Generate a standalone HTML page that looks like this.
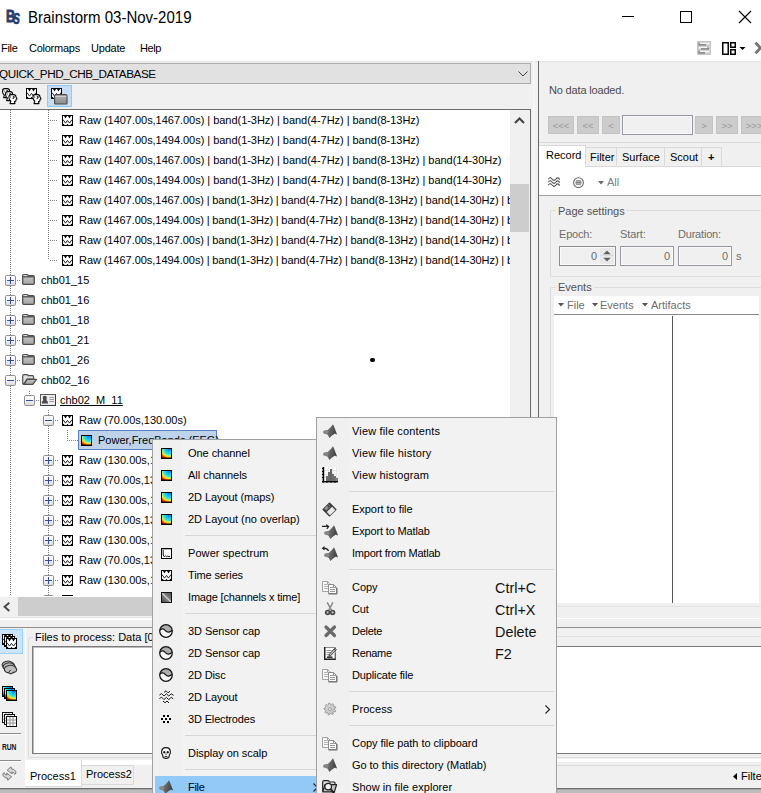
<!DOCTYPE html>
<html><head><meta charset="utf-8"><title>Brainstorm</title>
<style>
*{box-sizing:border-box;margin:0;padding:0}
html,body{width:761px;height:793px;overflow:hidden;background:#f0f0f0}
body{position:relative;font-family:"Liberation Sans",Arial,sans-serif;font-size:11px;color:#000}
.a{position:absolute}
.t{position:absolute;white-space:nowrap;line-height:14px;height:14px}
svg{position:absolute;overflow:visible}
.vd{position:absolute;width:1px;background-image:linear-gradient(#7f7f7f 50%,rgba(0,0,0,0) 50%);background-size:1px 2px}
.hd{position:absolute;height:1px;background-image:linear-gradient(90deg,#7f7f7f 50%,rgba(0,0,0,0) 50%);background-size:2px 1px}
.menu{position:absolute;background:#f2f2f2;border:1px solid #a0a0a0;overflow:hidden}
.gut{position:absolute;left:0;top:0;bottom:0;background:#f0f0f0}
.sep{position:absolute;height:1px;background:#d7d7d7}
.sc{position:absolute;font-size:14.4px;line-height:18px;height:18px;white-space:nowrap;color:#111}
.g{color:#5f5f5f}
.btn{position:absolute;background:#cccccc;border:1px solid #c3c3c3;color:#9a9a9a;text-align:center;font-size:9.5px;line-height:17px;height:18px;top:116px}
.fld{position:absolute;border:1px solid #9498a0;background:#f0f0f0;box-shadow:inset 0 0 0 1px #fafafa}
</style></head><body>
<div class="a" style="left:0;top:0;width:761px;height:61px;background:#fff"></div>
<div class="t" style="left:6px;top:7px;font-weight:bold;font-size:17px;line-height:20px;height:20px;color:#2a3c6a;transform:scaleX(0.74);transform-origin:0 0;-webkit-text-stroke:0.9px #2a3c6a">B</div><div class="t" style="left:13px;top:4.5px;font-weight:bold;font-style:italic;font-size:21px;line-height:24px;height:24px;color:#2a3c6a;transform:scaleX(0.62);transform-origin:0 0;-webkit-text-stroke:0.5px #2a3c6a">s</div>
<div class="t" style="left:28px;top:8px;font-size:16px;line-height:20px;height:20px;transform:scaleX(0.938);transform-origin:0 0">Brainstorm 03-Nov-2019</div>
<svg style="left:622px;top:10px" width="131" height="14" viewBox="0 0 131 14"><path d="M0 6.5 H12" stroke="#000" stroke-width="1"/><rect x="58.5" y="1.5" width="11" height="11" fill="none" stroke="#000" stroke-width="1"/><path d="M117 1 L129 13 M129 1 L117 13" stroke="#000" stroke-width="1.1"/></svg>
<div class="t" style="left:1px;top:41px;letter-spacing:-0.3px">File</div><div class="t" style="left:29px;top:41px;letter-spacing:-0.25px">Colormaps</div><div class="t" style="left:91px;top:41px;letter-spacing:-0.2px">Update</div><div class="t" style="left:140px;top:41px;letter-spacing:-0.4px">Help</div>
<svg style="left:697px;top:41px" width="14" height="14" viewBox="0 0 14 14"><rect x="0" y="0" width="14" height="14" fill="#c8c8c8"/><path d="M3 2.6 H12.5 M2 6.6 H12.5 M3 10.6 H12.5" stroke="#f4f4f4" stroke-width="1.6"/><path d="M1.5 3.9 H9 M4 7.9 H12 M1.5 11.9 H8" stroke="#777" stroke-width="1.3"/><path d="M2 1.5 V4 M11 5.5 V8 M2 9.5 V12" stroke="#8a8a8a" stroke-width="1.2"/></svg><svg style="left:722px;top:42px" width="26" height="13" viewBox="0 0 26 13"><rect x="0.75" y="0.75" width="5.5" height="11.5" fill="#fff" stroke="#000" stroke-width="1.5"/><rect x="8.75" y="0.75" width="4.5" height="4.5" fill="#fff" stroke="#000" stroke-width="1.5"/><rect x="8.75" y="7.75" width="4.5" height="4.5" fill="#fff" stroke="#000" stroke-width="1.5"/><path d="M17.5 5 H23.5 L20.5 8 Z" fill="#000"/></svg><svg style="left:754px;top:42px" width="8" height="12" viewBox="0 0 8 12"><path d="M1.5 0.8 L6.5 6 L1.5 11.2" fill="none" stroke="#747474" stroke-width="2.8"/></svg>
<div class="a" style="left:0;top:61px;width:761px;height:2px;background:linear-gradient(#e3e3e3,#f0f0f0)"></div>
<div class="a" style="left:-1px;top:63px;width:532px;height:21px;background:#e1e1e1;border:1px solid #adadad"></div><div class="t" style="left:-1px;top:66px;font-size:11.7px;letter-spacing:-0.45px;line-height:15px;height:15px">QUICK_PHD_CHB_DATABASE</div><svg style="left:518px;top:71px" width="10" height="6" viewBox="0 0 10 6"><path d="M0.5 0.5 L5 5 L9.5 0.5" fill="none" stroke="#404040" stroke-width="1"/></svg>
<div class="a" style="left:47px;top:85px;width:25px;height:22px;background:#c4ddf4;border:1px solid #94c9f5"></div><svg style="left:0px;top:84px" width="20" height="22" viewBox="0 0 20 22"><path d="M4.6 4.6 H7 Q9.6 4.6 9.6 7 L10.6 8.8 L9.6 9.4 V10.6 Q9.4 11.6 8 11.4 L8.6 13.6 H3.6 L4.4 11 Q2.5 9.8 2.5 7.4 Q2.5 4.6 4.6 4.6 Z" fill="#fff" stroke="#000" stroke-width="1.05" stroke-linejoin="round"/><path d="M6.4 6.6 h1.4 v1.2 h-1 v1.4" fill="none" stroke="#000" stroke-width="0.9"/><rect x="3.6" y="6" width="1.2" height="2.4" fill="#9a9a9a"/><path d="M7.6 7.6 H10 Q12.6 7.6 12.6 10 L13.6 11.8 L12.6 12.4 V13.6 Q12.4 14.6 11 14.4 L11.6 16.6 H6.6 L7.4 14 Q5.5 12.8 5.5 10.4 Q5.5 7.6 7.6 7.6 Z" fill="#fff" stroke="#000" stroke-width="1.05" stroke-linejoin="round"/><path d="M9.4 9.6 h1.4 v1.2 h-1 v1.4" fill="none" stroke="#000" stroke-width="0.9"/><rect x="6.6" y="9" width="1.2" height="2.4" fill="#9a9a9a"/><path d="M11.0 10.6 H13.4 Q16.0 10.6 16.0 13 L17.0 14.8 L16.0 15.4 V16.6 Q15.8 17.6 14.4 17.4 L15.0 19.6 H10.0 L10.8 17 Q8.9 15.8 8.9 13.4 Q8.9 10.6 11.0 10.6 Z" fill="#fff" stroke="#000" stroke-width="1.05" stroke-linejoin="round"/><path d="M12.8 12.6 h1.4 v1.2 h-1 v1.4" fill="none" stroke="#000" stroke-width="0.9"/><rect x="10.0" y="12" width="1.2" height="2.4" fill="#9a9a9a"/></svg><svg style="left:26px;top:88px" width="16" height="17" viewBox="0 0 16 17"><rect x="0.5" y="0.5" width="10" height="10" fill="#fff" stroke="#000" stroke-width="1"/><path d="M2 1 H5 L3.5 3.5 Z M6 1 H9 L7.5 3.5 Z" fill="#000"/><path d="M1 4.6 L3.5 8.1 L5.5 5.4 L7.5 8.1 L10 4.6" fill="none" stroke="#222" stroke-width="1"/><path d="M1 10 V9.1 L1.7 8.8 L2.6 10 Z M4.6 10 L5.5 8.7 L6.4 10 Z M8.4 10 L9.3 8.8 L10 9.1 V10 Z" fill="#000"/><path d="M9.0 6.6 H11.4 Q14.0 6.6 14.0 9 L15.0 10.8 L14.0 11.4 V12.6 Q13.8 13.6 12.4 13.4 L13.0 15.6 H8.0 L8.8 13 Q6.9 11.8 6.9 9.4 Q6.9 6.6 9.0 6.6 Z" fill="#fff" stroke="#000" stroke-width="1.05" stroke-linejoin="round"/><path d="M10.8 8.6 h1.4 v1.2 h-1 v1.4" fill="none" stroke="#000" stroke-width="0.9"/><rect x="8.0" y="8" width="1.2" height="2.4" fill="#9a9a9a"/></svg><svg style="left:51px;top:88px" width="17" height="17" viewBox="0 0 17 17"><linearGradient id="tbf" x1="0" y1="0" x2="0" y2="1"><stop offset="0" stop-color="#b4b4b4"/><stop offset="1" stop-color="#8c8c8c"/></linearGradient><rect x="0.5" y="0.5" width="10" height="10" fill="#fff" stroke="#000" stroke-width="1"/><path d="M2 1 H5 L3.5 3.5 Z M6 1 H9 L7.5 3.5 Z" fill="#000"/><path d="M1 4.6 L3.5 8.1 L5.5 5.4 L7.5 8.1 L10 4.6" fill="none" stroke="#222" stroke-width="1"/><path d="M1 10 V9.1 L1.7 8.8 L2.6 10 Z M4.6 10 L5.5 8.7 L6.4 10 Z M8.4 10 L9.3 8.8 L10 9.1 V10 Z" fill="#000"/><path d="M3.6 15.4 V8 Q3.6 6.6 5 6.6 H14.6 Q16 6.6 16 8 V15 Q16 16 15 16 H4.6 Q3.6 16 3.6 15 Z" fill="url(#tbf)" stroke="#4a4a4a" stroke-width="1.1"/><path d="M4.2 8.4 H15.4" stroke="#d8d8d8" stroke-width="0.9"/></svg>
<div class="a" id="tree" style="left:0;top:109px;width:531px;height:508px;background:#fff;border-top:1px solid #6c6c6c;border-right:1px solid #6c6c6c"></div>
<div class="a" style="left:0;top:110px;width:510px;height:486px;overflow:hidden">
<div class="vd" style="left:10px;top:0;height:487px"></div><div class="vd" style="left:48px;top:0;height:150px"></div><div class="hd" style="left:50px;top:10px;width:8px"></div><svg style="left:62px;top:5px" width="11" height="11" viewBox="0 0 11 11"><rect x="0.5" y="0.5" width="10" height="10" fill="#fff" stroke="#000" stroke-width="1"/><path d="M2 1 H5 L3.5 3.5 Z M6 1 H9 L7.5 3.5 Z" fill="#000"/><path d="M1 4.6 L3.5 8.1 L5.5 5.4 L7.5 8.1 L10 4.6" fill="none" stroke="#222" stroke-width="1"/><path d="M1 10 V9.1 L1.7 8.8 L2.6 10 Z M4.6 10 L5.5 8.7 L6.4 10 Z M8.4 10 L9.3 8.8 L10 9.1 V10 Z" fill="#000"/></svg><div class="t" style="left:79px;top:3px;letter-spacing:-0.03px">Raw (1407.00s,1467.00s) | band(1-3Hz) | band(4-7Hz) | band(8-13Hz)</div><div class="hd" style="left:50px;top:30px;width:8px"></div><svg style="left:62px;top:25px" width="11" height="11" viewBox="0 0 11 11"><rect x="0.5" y="0.5" width="10" height="10" fill="#fff" stroke="#000" stroke-width="1"/><path d="M2 1 H5 L3.5 3.5 Z M6 1 H9 L7.5 3.5 Z" fill="#000"/><path d="M1 4.6 L3.5 8.1 L5.5 5.4 L7.5 8.1 L10 4.6" fill="none" stroke="#222" stroke-width="1"/><path d="M1 10 V9.1 L1.7 8.8 L2.6 10 Z M4.6 10 L5.5 8.7 L6.4 10 Z M8.4 10 L9.3 8.8 L10 9.1 V10 Z" fill="#000"/></svg><div class="t" style="left:79px;top:23px;letter-spacing:-0.03px">Raw (1467.00s,1494.00s) | band(1-3Hz) | band(4-7Hz) | band(8-13Hz)</div><div class="hd" style="left:50px;top:50px;width:8px"></div><svg style="left:62px;top:45px" width="11" height="11" viewBox="0 0 11 11"><rect x="0.5" y="0.5" width="10" height="10" fill="#fff" stroke="#000" stroke-width="1"/><path d="M2 1 H5 L3.5 3.5 Z M6 1 H9 L7.5 3.5 Z" fill="#000"/><path d="M1 4.6 L3.5 8.1 L5.5 5.4 L7.5 8.1 L10 4.6" fill="none" stroke="#222" stroke-width="1"/><path d="M1 10 V9.1 L1.7 8.8 L2.6 10 Z M4.6 10 L5.5 8.7 L6.4 10 Z M8.4 10 L9.3 8.8 L10 9.1 V10 Z" fill="#000"/></svg><div class="t" style="left:79px;top:43px;letter-spacing:-0.03px">Raw (1407.00s,1467.00s) | band(1-3Hz) | band(4-7Hz) | band(8-13Hz) | band(14-30Hz)</div><div class="hd" style="left:50px;top:70px;width:8px"></div><svg style="left:62px;top:65px" width="11" height="11" viewBox="0 0 11 11"><rect x="0.5" y="0.5" width="10" height="10" fill="#fff" stroke="#000" stroke-width="1"/><path d="M2 1 H5 L3.5 3.5 Z M6 1 H9 L7.5 3.5 Z" fill="#000"/><path d="M1 4.6 L3.5 8.1 L5.5 5.4 L7.5 8.1 L10 4.6" fill="none" stroke="#222" stroke-width="1"/><path d="M1 10 V9.1 L1.7 8.8 L2.6 10 Z M4.6 10 L5.5 8.7 L6.4 10 Z M8.4 10 L9.3 8.8 L10 9.1 V10 Z" fill="#000"/></svg><div class="t" style="left:79px;top:63px;letter-spacing:-0.03px">Raw (1467.00s,1494.00s) | band(1-3Hz) | band(4-7Hz) | band(8-13Hz) | band(14-30Hz)</div><div class="hd" style="left:50px;top:90px;width:8px"></div><svg style="left:62px;top:85px" width="11" height="11" viewBox="0 0 11 11"><rect x="0.5" y="0.5" width="10" height="10" fill="#fff" stroke="#000" stroke-width="1"/><path d="M2 1 H5 L3.5 3.5 Z M6 1 H9 L7.5 3.5 Z" fill="#000"/><path d="M1 4.6 L3.5 8.1 L5.5 5.4 L7.5 8.1 L10 4.6" fill="none" stroke="#222" stroke-width="1"/><path d="M1 10 V9.1 L1.7 8.8 L2.6 10 Z M4.6 10 L5.5 8.7 L6.4 10 Z M8.4 10 L9.3 8.8 L10 9.1 V10 Z" fill="#000"/></svg><div class="t" style="left:79px;top:83px;letter-spacing:-0.03px;word-spacing:-0.3px">Raw (1407.00s,1467.00s) | band(1-3Hz) | band(4-7Hz) | band(8-13Hz) | band(14-30Hz) | band(31-45Hz)</div><div class="hd" style="left:50px;top:110px;width:8px"></div><svg style="left:62px;top:105px" width="11" height="11" viewBox="0 0 11 11"><rect x="0.5" y="0.5" width="10" height="10" fill="#fff" stroke="#000" stroke-width="1"/><path d="M2 1 H5 L3.5 3.5 Z M6 1 H9 L7.5 3.5 Z" fill="#000"/><path d="M1 4.6 L3.5 8.1 L5.5 5.4 L7.5 8.1 L10 4.6" fill="none" stroke="#222" stroke-width="1"/><path d="M1 10 V9.1 L1.7 8.8 L2.6 10 Z M4.6 10 L5.5 8.7 L6.4 10 Z M8.4 10 L9.3 8.8 L10 9.1 V10 Z" fill="#000"/></svg><div class="t" style="left:79px;top:103px;letter-spacing:-0.03px;word-spacing:-0.3px">Raw (1467.00s,1494.00s) | band(1-3Hz) | band(4-7Hz) | band(8-13Hz) | band(14-30Hz) | band(31-45Hz)</div><div class="hd" style="left:50px;top:130px;width:8px"></div><svg style="left:62px;top:125px" width="11" height="11" viewBox="0 0 11 11"><rect x="0.5" y="0.5" width="10" height="10" fill="#fff" stroke="#000" stroke-width="1"/><path d="M2 1 H5 L3.5 3.5 Z M6 1 H9 L7.5 3.5 Z" fill="#000"/><path d="M1 4.6 L3.5 8.1 L5.5 5.4 L7.5 8.1 L10 4.6" fill="none" stroke="#222" stroke-width="1"/><path d="M1 10 V9.1 L1.7 8.8 L2.6 10 Z M4.6 10 L5.5 8.7 L6.4 10 Z M8.4 10 L9.3 8.8 L10 9.1 V10 Z" fill="#000"/></svg><div class="t" style="left:79px;top:123px;letter-spacing:-0.03px;word-spacing:-0.3px">Raw (1407.00s,1467.00s) | band(1-3Hz) | band(4-7Hz) | band(8-13Hz) | band(14-30Hz) | band(31-45Hz) | band(46-70Hz)</div><div class="hd" style="left:50px;top:150px;width:8px"></div><svg style="left:62px;top:145px" width="11" height="11" viewBox="0 0 11 11"><rect x="0.5" y="0.5" width="10" height="10" fill="#fff" stroke="#000" stroke-width="1"/><path d="M2 1 H5 L3.5 3.5 Z M6 1 H9 L7.5 3.5 Z" fill="#000"/><path d="M1 4.6 L3.5 8.1 L5.5 5.4 L7.5 8.1 L10 4.6" fill="none" stroke="#222" stroke-width="1"/><path d="M1 10 V9.1 L1.7 8.8 L2.6 10 Z M4.6 10 L5.5 8.7 L6.4 10 Z M8.4 10 L9.3 8.8 L10 9.1 V10 Z" fill="#000"/></svg><div class="t" style="left:79px;top:143px;letter-spacing:-0.03px;word-spacing:-0.3px">Raw (1467.00s,1494.00s) | band(1-3Hz) | band(4-7Hz) | band(8-13Hz) | band(14-30Hz) | band(31-45Hz) | band(46-70Hz)</div>
<svg style="left:5px;top:165px" width="11" height="11" viewBox="0 0 11 11"><linearGradient id="eg5_165" x1="0" y1="0" x2="0" y2="1"><stop offset="0" stop-color="#fff"/><stop offset="0.5" stop-color="#f4f4f4"/><stop offset="1" stop-color="#d8d8d8"/></linearGradient><rect x="0.5" y="0.5" width="10" height="10" rx="1.2" fill="url(#eg5_165)" stroke="#8e8e8e"/><rect x="2" y="5" width="7" height="1" fill="#2f4ea3"/><rect x="5" y="2" width="1" height="7" fill="#2f4ea3"/></svg><div class="hd" style="left:17px;top:170px;width:4px"></div><svg style="left:22px;top:164px" width="13" height="11" viewBox="0 0 13 11"><linearGradient id="fg22_164" x1="0" y1="0" x2="0" y2="1"><stop offset="0" stop-color="#c8c8c8"/><stop offset="1" stop-color="#a6a6a6"/></linearGradient><path d="M0.7 9.3 V2 Q0.7 0.7 2 0.7 H4.8 Q5.8 0.7 6.2 1.7 H11 Q12.3 1.7 12.3 3 V9.3 Q12.3 10.3 11.3 10.3 H1.7 Q0.7 10.3 0.7 9.3 Z" fill="url(#fg22_164)" stroke="#4d4d4d" stroke-width="1.3"/><path d="M1.6 1.6 H5.2" stroke="#f0f0f0" stroke-width="0.9"/><path d="M1.2 2.8 H11.8" stroke="#4d4d4d" stroke-width="1.3"/></svg><div class="t" style="left:41px;top:163px;">chb01_15</div><svg style="left:5px;top:185px" width="11" height="11" viewBox="0 0 11 11"><linearGradient id="eg5_185" x1="0" y1="0" x2="0" y2="1"><stop offset="0" stop-color="#fff"/><stop offset="0.5" stop-color="#f4f4f4"/><stop offset="1" stop-color="#d8d8d8"/></linearGradient><rect x="0.5" y="0.5" width="10" height="10" rx="1.2" fill="url(#eg5_185)" stroke="#8e8e8e"/><rect x="2" y="5" width="7" height="1" fill="#2f4ea3"/><rect x="5" y="2" width="1" height="7" fill="#2f4ea3"/></svg><div class="hd" style="left:17px;top:190px;width:4px"></div><svg style="left:22px;top:184px" width="13" height="11" viewBox="0 0 13 11"><linearGradient id="fg22_184" x1="0" y1="0" x2="0" y2="1"><stop offset="0" stop-color="#c8c8c8"/><stop offset="1" stop-color="#a6a6a6"/></linearGradient><path d="M0.7 9.3 V2 Q0.7 0.7 2 0.7 H4.8 Q5.8 0.7 6.2 1.7 H11 Q12.3 1.7 12.3 3 V9.3 Q12.3 10.3 11.3 10.3 H1.7 Q0.7 10.3 0.7 9.3 Z" fill="url(#fg22_184)" stroke="#4d4d4d" stroke-width="1.3"/><path d="M1.6 1.6 H5.2" stroke="#f0f0f0" stroke-width="0.9"/><path d="M1.2 2.8 H11.8" stroke="#4d4d4d" stroke-width="1.3"/></svg><div class="t" style="left:41px;top:183px;">chb01_16</div><svg style="left:5px;top:205px" width="11" height="11" viewBox="0 0 11 11"><linearGradient id="eg5_205" x1="0" y1="0" x2="0" y2="1"><stop offset="0" stop-color="#fff"/><stop offset="0.5" stop-color="#f4f4f4"/><stop offset="1" stop-color="#d8d8d8"/></linearGradient><rect x="0.5" y="0.5" width="10" height="10" rx="1.2" fill="url(#eg5_205)" stroke="#8e8e8e"/><rect x="2" y="5" width="7" height="1" fill="#2f4ea3"/><rect x="5" y="2" width="1" height="7" fill="#2f4ea3"/></svg><div class="hd" style="left:17px;top:210px;width:4px"></div><svg style="left:22px;top:204px" width="13" height="11" viewBox="0 0 13 11"><linearGradient id="fg22_204" x1="0" y1="0" x2="0" y2="1"><stop offset="0" stop-color="#c8c8c8"/><stop offset="1" stop-color="#a6a6a6"/></linearGradient><path d="M0.7 9.3 V2 Q0.7 0.7 2 0.7 H4.8 Q5.8 0.7 6.2 1.7 H11 Q12.3 1.7 12.3 3 V9.3 Q12.3 10.3 11.3 10.3 H1.7 Q0.7 10.3 0.7 9.3 Z" fill="url(#fg22_204)" stroke="#4d4d4d" stroke-width="1.3"/><path d="M1.6 1.6 H5.2" stroke="#f0f0f0" stroke-width="0.9"/><path d="M1.2 2.8 H11.8" stroke="#4d4d4d" stroke-width="1.3"/></svg><div class="t" style="left:41px;top:203px;">chb01_18</div><svg style="left:5px;top:225px" width="11" height="11" viewBox="0 0 11 11"><linearGradient id="eg5_225" x1="0" y1="0" x2="0" y2="1"><stop offset="0" stop-color="#fff"/><stop offset="0.5" stop-color="#f4f4f4"/><stop offset="1" stop-color="#d8d8d8"/></linearGradient><rect x="0.5" y="0.5" width="10" height="10" rx="1.2" fill="url(#eg5_225)" stroke="#8e8e8e"/><rect x="2" y="5" width="7" height="1" fill="#2f4ea3"/><rect x="5" y="2" width="1" height="7" fill="#2f4ea3"/></svg><div class="hd" style="left:17px;top:230px;width:4px"></div><svg style="left:22px;top:224px" width="13" height="11" viewBox="0 0 13 11"><linearGradient id="fg22_224" x1="0" y1="0" x2="0" y2="1"><stop offset="0" stop-color="#c8c8c8"/><stop offset="1" stop-color="#a6a6a6"/></linearGradient><path d="M0.7 9.3 V2 Q0.7 0.7 2 0.7 H4.8 Q5.8 0.7 6.2 1.7 H11 Q12.3 1.7 12.3 3 V9.3 Q12.3 10.3 11.3 10.3 H1.7 Q0.7 10.3 0.7 9.3 Z" fill="url(#fg22_224)" stroke="#4d4d4d" stroke-width="1.3"/><path d="M1.6 1.6 H5.2" stroke="#f0f0f0" stroke-width="0.9"/><path d="M1.2 2.8 H11.8" stroke="#4d4d4d" stroke-width="1.3"/></svg><div class="t" style="left:41px;top:223px;">chb01_21</div><svg style="left:5px;top:245px" width="11" height="11" viewBox="0 0 11 11"><linearGradient id="eg5_245" x1="0" y1="0" x2="0" y2="1"><stop offset="0" stop-color="#fff"/><stop offset="0.5" stop-color="#f4f4f4"/><stop offset="1" stop-color="#d8d8d8"/></linearGradient><rect x="0.5" y="0.5" width="10" height="10" rx="1.2" fill="url(#eg5_245)" stroke="#8e8e8e"/><rect x="2" y="5" width="7" height="1" fill="#2f4ea3"/><rect x="5" y="2" width="1" height="7" fill="#2f4ea3"/></svg><div class="hd" style="left:17px;top:250px;width:4px"></div><svg style="left:22px;top:244px" width="13" height="11" viewBox="0 0 13 11"><linearGradient id="fg22_244" x1="0" y1="0" x2="0" y2="1"><stop offset="0" stop-color="#c8c8c8"/><stop offset="1" stop-color="#a6a6a6"/></linearGradient><path d="M0.7 9.3 V2 Q0.7 0.7 2 0.7 H4.8 Q5.8 0.7 6.2 1.7 H11 Q12.3 1.7 12.3 3 V9.3 Q12.3 10.3 11.3 10.3 H1.7 Q0.7 10.3 0.7 9.3 Z" fill="url(#fg22_244)" stroke="#4d4d4d" stroke-width="1.3"/><path d="M1.6 1.6 H5.2" stroke="#f0f0f0" stroke-width="0.9"/><path d="M1.2 2.8 H11.8" stroke="#4d4d4d" stroke-width="1.3"/></svg><div class="t" style="left:41px;top:243px;">chb01_26</div>
<svg style="left:5px;top:265px" width="11" height="11" viewBox="0 0 11 11"><linearGradient id="eg5_265" x1="0" y1="0" x2="0" y2="1"><stop offset="0" stop-color="#fff"/><stop offset="0.5" stop-color="#f4f4f4"/><stop offset="1" stop-color="#d8d8d8"/></linearGradient><rect x="0.5" y="0.5" width="10" height="10" rx="1.2" fill="url(#eg5_265)" stroke="#8e8e8e"/><rect x="2" y="5" width="7" height="1" fill="#2f4ea3"/></svg><div class="hd" style="left:17px;top:270px;width:4px"></div><svg style="left:22px;top:264px" width="15" height="11" viewBox="0 0 15 11"><linearGradient id="fo22_264" x1="0" y1="0" x2="0" y2="1"><stop offset="0" stop-color="#c4c4c4"/><stop offset="1" stop-color="#a2a2a2"/></linearGradient><path d="M0.7 9.6 V2 Q0.7 0.7 2 0.7 H4.8 Q5.8 0.7 6.2 1.7 H10.6 Q11.6 1.7 11.6 2.8 V5.2 H5 L1.8 10 Q0.7 10.4 0.7 9.6 Z" fill="#dedede" stroke="#4d4d4d" stroke-width="1.2"/><path d="M1.8 10.4 L5.4 5.4 H14.6 L10.8 10.4 Z" fill="url(#fo22_264)" stroke="#4d4d4d" stroke-width="1.2" stroke-linejoin="round"/></svg><div class="t" style="left:41px;top:263px;">chb02_16</div><div class="vd" style="left:29px;top:281px;height:4px"></div><svg style="left:24px;top:285px" width="11" height="11" viewBox="0 0 11 11"><linearGradient id="eg24_285" x1="0" y1="0" x2="0" y2="1"><stop offset="0" stop-color="#fff"/><stop offset="0.5" stop-color="#f4f4f4"/><stop offset="1" stop-color="#d8d8d8"/></linearGradient><rect x="0.5" y="0.5" width="10" height="10" rx="1.2" fill="url(#eg24_285)" stroke="#8e8e8e"/><rect x="2" y="5" width="7" height="1" fill="#2f4ea3"/></svg><div class="hd" style="left:36px;top:290px;width:4px"></div><svg style="left:40px;top:284px" width="16" height="12" viewBox="0 0 16 12"><rect x="0.5" y="0.5" width="15" height="11" fill="#ececec" stroke="#5a5a5a"/><path d="M1 11.5 H15.5 V1" fill="none" stroke="#3a3a3a" stroke-width="1"/><path d="M4.8 1.8 C6.4 1.8 6.9 3 6.7 4.4 C6.6 5.4 6.3 5.8 6.6 6.6 C7.6 7 8 7.8 8 9.6 H1.8 C1.8 7.8 2.2 7 3.2 6.6 C3.4 5.8 3 5.4 2.9 4.4 C2.7 3 3.2 1.8 4.8 1.8 Z" fill="#4a4a4a"/><path d="M9.5 3.5 H14 M9.5 5.5 H14 M9.5 7.5 H14" stroke="#9a9a9a" stroke-width="1"/></svg><div class="t" style="left:60px;top:283px;text-decoration:underline">chb02_M_11</div><div class="vd" style="left:48px;top:300px;height:187px"></div><svg style="left:43px;top:305px" width="11" height="11" viewBox="0 0 11 11"><linearGradient id="eg43_305" x1="0" y1="0" x2="0" y2="1"><stop offset="0" stop-color="#fff"/><stop offset="0.5" stop-color="#f4f4f4"/><stop offset="1" stop-color="#d8d8d8"/></linearGradient><rect x="0.5" y="0.5" width="10" height="10" rx="1.2" fill="url(#eg43_305)" stroke="#8e8e8e"/><rect x="2" y="5" width="7" height="1" fill="#2f4ea3"/></svg><div class="hd" style="left:55px;top:310px;width:4px"></div><svg style="left:62px;top:305px" width="11" height="11" viewBox="0 0 11 11"><rect x="0.5" y="0.5" width="10" height="10" fill="#fff" stroke="#000" stroke-width="1"/><path d="M2 1 H5 L3.5 3.5 Z M6 1 H9 L7.5 3.5 Z" fill="#000"/><path d="M1 4.6 L3.5 8.1 L5.5 5.4 L7.5 8.1 L10 4.6" fill="none" stroke="#222" stroke-width="1"/><path d="M1 10 V9.1 L1.7 8.8 L2.6 10 Z M4.6 10 L5.5 8.7 L6.4 10 Z M8.4 10 L9.3 8.8 L10 9.1 V10 Z" fill="#000"/></svg><div class="t" style="left:79px;top:303px;">Raw (70.00s,130.00s)</div><div class="vd" style="left:67px;top:320px;height:10px"></div><div class="hd" style="left:67px;top:330px;width:11px"></div><div class="a" style="left:78px;top:320px;width:139px;height:20px;background:#bed2ea;border:1px solid #5b7fc4"></div><svg style="left:81px;top:325px" width="11" height="11" viewBox="0 0 11 11"><radialGradient id="jg81_325" cx="0.75" cy="0.05" r="1.08"><stop offset="0" stop-color="#1560e0"/><stop offset="0.22" stop-color="#12b4f4"/><stop offset="0.5" stop-color="#2fe6e0"/><stop offset="0.62" stop-color="#a8f070"/><stop offset="0.7" stop-color="#f4e820"/><stop offset="0.8" stop-color="#ff8a00"/><stop offset="0.9" stop-color="#f21a00"/><stop offset="1" stop-color="#c00000"/></radialGradient><rect x="0.5" y="0.5" width="10" height="10" fill="url(#jg81_325)" stroke="#000" stroke-width="1"/><rect x="0" y="9.6" width="11" height="1.4" fill="#000"/></svg><div class="t" style="left:98px;top:323px;">Power,FreqBands (EEG)</div>
<svg style="left:43px;top:345px" width="11" height="11" viewBox="0 0 11 11"><linearGradient id="eg43_345" x1="0" y1="0" x2="0" y2="1"><stop offset="0" stop-color="#fff"/><stop offset="0.5" stop-color="#f4f4f4"/><stop offset="1" stop-color="#d8d8d8"/></linearGradient><rect x="0.5" y="0.5" width="10" height="10" rx="1.2" fill="url(#eg43_345)" stroke="#8e8e8e"/><rect x="2" y="5" width="7" height="1" fill="#2f4ea3"/><rect x="5" y="2" width="1" height="7" fill="#2f4ea3"/></svg><div class="hd" style="left:55px;top:350px;width:4px"></div><svg style="left:62px;top:345px" width="11" height="11" viewBox="0 0 11 11"><rect x="0.5" y="0.5" width="10" height="10" fill="#fff" stroke="#000" stroke-width="1"/><path d="M2 1 H5 L3.5 3.5 Z M6 1 H9 L7.5 3.5 Z" fill="#000"/><path d="M1 4.6 L3.5 8.1 L5.5 5.4 L7.5 8.1 L10 4.6" fill="none" stroke="#222" stroke-width="1"/><path d="M1 10 V9.1 L1.7 8.8 L2.6 10 Z M4.6 10 L5.5 8.7 L6.4 10 Z M8.4 10 L9.3 8.8 L10 9.1 V10 Z" fill="#000"/></svg><div class="t" style="left:79px;top:343px;">Raw (130.00s,190.00s)</div><svg style="left:43px;top:365px" width="11" height="11" viewBox="0 0 11 11"><linearGradient id="eg43_365" x1="0" y1="0" x2="0" y2="1"><stop offset="0" stop-color="#fff"/><stop offset="0.5" stop-color="#f4f4f4"/><stop offset="1" stop-color="#d8d8d8"/></linearGradient><rect x="0.5" y="0.5" width="10" height="10" rx="1.2" fill="url(#eg43_365)" stroke="#8e8e8e"/><rect x="2" y="5" width="7" height="1" fill="#2f4ea3"/><rect x="5" y="2" width="1" height="7" fill="#2f4ea3"/></svg><div class="hd" style="left:55px;top:370px;width:4px"></div><svg style="left:62px;top:365px" width="11" height="11" viewBox="0 0 11 11"><rect x="0.5" y="0.5" width="10" height="10" fill="#fff" stroke="#000" stroke-width="1"/><path d="M2 1 H5 L3.5 3.5 Z M6 1 H9 L7.5 3.5 Z" fill="#000"/><path d="M1 4.6 L3.5 8.1 L5.5 5.4 L7.5 8.1 L10 4.6" fill="none" stroke="#222" stroke-width="1"/><path d="M1 10 V9.1 L1.7 8.8 L2.6 10 Z M4.6 10 L5.5 8.7 L6.4 10 Z M8.4 10 L9.3 8.8 L10 9.1 V10 Z" fill="#000"/></svg><div class="t" style="left:79px;top:363px;">Raw (70.00s,130.00s)</div><svg style="left:43px;top:385px" width="11" height="11" viewBox="0 0 11 11"><linearGradient id="eg43_385" x1="0" y1="0" x2="0" y2="1"><stop offset="0" stop-color="#fff"/><stop offset="0.5" stop-color="#f4f4f4"/><stop offset="1" stop-color="#d8d8d8"/></linearGradient><rect x="0.5" y="0.5" width="10" height="10" rx="1.2" fill="url(#eg43_385)" stroke="#8e8e8e"/><rect x="2" y="5" width="7" height="1" fill="#2f4ea3"/><rect x="5" y="2" width="1" height="7" fill="#2f4ea3"/></svg><div class="hd" style="left:55px;top:390px;width:4px"></div><svg style="left:62px;top:385px" width="11" height="11" viewBox="0 0 11 11"><rect x="0.5" y="0.5" width="10" height="10" fill="#fff" stroke="#000" stroke-width="1"/><path d="M2 1 H5 L3.5 3.5 Z M6 1 H9 L7.5 3.5 Z" fill="#000"/><path d="M1 4.6 L3.5 8.1 L5.5 5.4 L7.5 8.1 L10 4.6" fill="none" stroke="#222" stroke-width="1"/><path d="M1 10 V9.1 L1.7 8.8 L2.6 10 Z M4.6 10 L5.5 8.7 L6.4 10 Z M8.4 10 L9.3 8.8 L10 9.1 V10 Z" fill="#000"/></svg><div class="t" style="left:79px;top:383px;">Raw (130.00s,190.00s)</div><svg style="left:43px;top:405px" width="11" height="11" viewBox="0 0 11 11"><linearGradient id="eg43_405" x1="0" y1="0" x2="0" y2="1"><stop offset="0" stop-color="#fff"/><stop offset="0.5" stop-color="#f4f4f4"/><stop offset="1" stop-color="#d8d8d8"/></linearGradient><rect x="0.5" y="0.5" width="10" height="10" rx="1.2" fill="url(#eg43_405)" stroke="#8e8e8e"/><rect x="2" y="5" width="7" height="1" fill="#2f4ea3"/><rect x="5" y="2" width="1" height="7" fill="#2f4ea3"/></svg><div class="hd" style="left:55px;top:410px;width:4px"></div><svg style="left:62px;top:405px" width="11" height="11" viewBox="0 0 11 11"><rect x="0.5" y="0.5" width="10" height="10" fill="#fff" stroke="#000" stroke-width="1"/><path d="M2 1 H5 L3.5 3.5 Z M6 1 H9 L7.5 3.5 Z" fill="#000"/><path d="M1 4.6 L3.5 8.1 L5.5 5.4 L7.5 8.1 L10 4.6" fill="none" stroke="#222" stroke-width="1"/><path d="M1 10 V9.1 L1.7 8.8 L2.6 10 Z M4.6 10 L5.5 8.7 L6.4 10 Z M8.4 10 L9.3 8.8 L10 9.1 V10 Z" fill="#000"/></svg><div class="t" style="left:79px;top:403px;">Raw (70.00s,130.00s)</div><svg style="left:43px;top:425px" width="11" height="11" viewBox="0 0 11 11"><linearGradient id="eg43_425" x1="0" y1="0" x2="0" y2="1"><stop offset="0" stop-color="#fff"/><stop offset="0.5" stop-color="#f4f4f4"/><stop offset="1" stop-color="#d8d8d8"/></linearGradient><rect x="0.5" y="0.5" width="10" height="10" rx="1.2" fill="url(#eg43_425)" stroke="#8e8e8e"/><rect x="2" y="5" width="7" height="1" fill="#2f4ea3"/><rect x="5" y="2" width="1" height="7" fill="#2f4ea3"/></svg><div class="hd" style="left:55px;top:430px;width:4px"></div><svg style="left:62px;top:425px" width="11" height="11" viewBox="0 0 11 11"><rect x="0.5" y="0.5" width="10" height="10" fill="#fff" stroke="#000" stroke-width="1"/><path d="M2 1 H5 L3.5 3.5 Z M6 1 H9 L7.5 3.5 Z" fill="#000"/><path d="M1 4.6 L3.5 8.1 L5.5 5.4 L7.5 8.1 L10 4.6" fill="none" stroke="#222" stroke-width="1"/><path d="M1 10 V9.1 L1.7 8.8 L2.6 10 Z M4.6 10 L5.5 8.7 L6.4 10 Z M8.4 10 L9.3 8.8 L10 9.1 V10 Z" fill="#000"/></svg><div class="t" style="left:79px;top:423px;">Raw (130.00s,190.00s)</div><svg style="left:43px;top:445px" width="11" height="11" viewBox="0 0 11 11"><linearGradient id="eg43_445" x1="0" y1="0" x2="0" y2="1"><stop offset="0" stop-color="#fff"/><stop offset="0.5" stop-color="#f4f4f4"/><stop offset="1" stop-color="#d8d8d8"/></linearGradient><rect x="0.5" y="0.5" width="10" height="10" rx="1.2" fill="url(#eg43_445)" stroke="#8e8e8e"/><rect x="2" y="5" width="7" height="1" fill="#2f4ea3"/><rect x="5" y="2" width="1" height="7" fill="#2f4ea3"/></svg><div class="hd" style="left:55px;top:450px;width:4px"></div><svg style="left:62px;top:445px" width="11" height="11" viewBox="0 0 11 11"><rect x="0.5" y="0.5" width="10" height="10" fill="#fff" stroke="#000" stroke-width="1"/><path d="M2 1 H5 L3.5 3.5 Z M6 1 H9 L7.5 3.5 Z" fill="#000"/><path d="M1 4.6 L3.5 8.1 L5.5 5.4 L7.5 8.1 L10 4.6" fill="none" stroke="#222" stroke-width="1"/><path d="M1 10 V9.1 L1.7 8.8 L2.6 10 Z M4.6 10 L5.5 8.7 L6.4 10 Z M8.4 10 L9.3 8.8 L10 9.1 V10 Z" fill="#000"/></svg><div class="t" style="left:79px;top:443px;">Raw (70.00s,130.00s)</div><svg style="left:43px;top:465px" width="11" height="11" viewBox="0 0 11 11"><linearGradient id="eg43_465" x1="0" y1="0" x2="0" y2="1"><stop offset="0" stop-color="#fff"/><stop offset="0.5" stop-color="#f4f4f4"/><stop offset="1" stop-color="#d8d8d8"/></linearGradient><rect x="0.5" y="0.5" width="10" height="10" rx="1.2" fill="url(#eg43_465)" stroke="#8e8e8e"/><rect x="2" y="5" width="7" height="1" fill="#2f4ea3"/><rect x="5" y="2" width="1" height="7" fill="#2f4ea3"/></svg><div class="hd" style="left:55px;top:470px;width:4px"></div><svg style="left:62px;top:465px" width="11" height="11" viewBox="0 0 11 11"><rect x="0.5" y="0.5" width="10" height="10" fill="#fff" stroke="#000" stroke-width="1"/><path d="M2 1 H5 L3.5 3.5 Z M6 1 H9 L7.5 3.5 Z" fill="#000"/><path d="M1 4.6 L3.5 8.1 L5.5 5.4 L7.5 8.1 L10 4.6" fill="none" stroke="#222" stroke-width="1"/><path d="M1 10 V9.1 L1.7 8.8 L2.6 10 Z M4.6 10 L5.5 8.7 L6.4 10 Z M8.4 10 L9.3 8.8 L10 9.1 V10 Z" fill="#000"/></svg><div class="t" style="left:79px;top:463px;">Raw (130.00s,190.00s)</div><svg style="left:43px;top:485px" width="11" height="11" viewBox="0 0 11 11"><linearGradient id="eg43_485" x1="0" y1="0" x2="0" y2="1"><stop offset="0" stop-color="#fff"/><stop offset="0.5" stop-color="#f4f4f4"/><stop offset="1" stop-color="#d8d8d8"/></linearGradient><rect x="0.5" y="0.5" width="10" height="10" rx="1.2" fill="url(#eg43_485)" stroke="#8e8e8e"/><rect x="2" y="5" width="7" height="1" fill="#2f4ea3"/><rect x="5" y="2" width="1" height="7" fill="#2f4ea3"/></svg><div class="hd" style="left:55px;top:490px;width:4px"></div><svg style="left:62px;top:485px" width="11" height="11" viewBox="0 0 11 11"><rect x="0.5" y="0.5" width="10" height="10" fill="#fff" stroke="#000" stroke-width="1"/><path d="M2 1 H5 L3.5 3.5 Z M6 1 H9 L7.5 3.5 Z" fill="#000"/><path d="M1 4.6 L3.5 8.1 L5.5 5.4 L7.5 8.1 L10 4.6" fill="none" stroke="#222" stroke-width="1"/><path d="M1 10 V9.1 L1.7 8.8 L2.6 10 Z M4.6 10 L5.5 8.7 L6.4 10 Z M8.4 10 L9.3 8.8 L10 9.1 V10 Z" fill="#000"/></svg>
</div>
<div class="a" style="left:370.4px;top:357.7px;width:4.6px;height:4.6px;border-radius:50%;background:#000"></div><div class="a" style="left:510px;top:110px;width:20px;height:487px;background:#f0f0f0"></div><div class="a" style="left:510px;top:184px;width:19px;height:48px;background:#cdcdcd"></div><svg style="left:514px;top:117px" width="11" height="7" viewBox="0 0 11 7"><path d="M1 6 L5.5 1.5 L10 6" fill="none" stroke="#404040" stroke-width="2"/></svg><div class="a" style="left:0;top:597px;width:530px;height:20px;background:#f0f0f0"></div><div class="a" style="left:18px;top:597px;width:300px;height:19px;background:#cdcdcd"></div><svg style="left:3px;top:602px" width="7" height="10" viewBox="0 0 7 10"><path d="M6.3 0.7 L1.6 4.8 L6.3 9" fill="none" stroke="#4a4a4a" stroke-width="2"/></svg><div class="a" style="left:0;top:617px;width:532px;height:1px;background:#e4e4e4"></div><div class="a" style="left:0;top:618px;width:532px;height:2px;background:#fdfdfd"></div>
<div class="a" style="left:533px;top:61px;width:2px;height:566px;background:#f6f6f6"></div><div class="a" style="left:538px;top:61px;width:1px;height:566px;background:#696969"></div>
<div class="t" style="left:549px;top:83px;color:#4a4a4a;letter-spacing:-0.17px">No data loaded.</div><div class="btn" style="left:548px;width:26px">&lt;&lt;&lt;</div><div class="btn" style="left:577px;width:22px">&lt;&lt;</div><div class="btn" style="left:602px;width:18px">&lt;</div><div class="btn" style="left:695px;width:18px">&gt;</div><div class="btn" style="left:716px;width:22px">&gt;&gt;</div><div class="btn" style="left:741px;width:26px">&gt;&gt;&gt;</div><div class="fld" style="left:622px;top:115px;width:71px;height:20px"></div>
<div class="a" style="left:539px;top:142px;width:222px;height:1px;background:#dadada"></div><div class="a" style="left:539px;top:166px;width:222px;height:29px;background:#fff;border-top:1px solid #d9d9d9"></div><div class="a" style="left:539px;top:195px;width:222px;height:1px;background:#a0a0a0"></div><div class="a" style="left:585px;top:147px;width:33px;height:20px;background:#f0f0f0;border:1px solid #d9d9d9"></div><div class="t" style="left:590px;top:150px;">Filter</div><div class="a" style="left:616px;top:147px;width:50px;height:20px;background:#f0f0f0;border:1px solid #d9d9d9"></div><div class="t" style="left:622px;top:150px;">Surface</div><div class="a" style="left:664px;top:147px;width:39px;height:20px;background:#f0f0f0;border:1px solid #d9d9d9"></div><div class="t" style="left:670px;top:150px;">Scout</div><div class="a" style="left:701px;top:147px;width:21px;height:20px;background:#f0f0f0;border:1px solid #d9d9d9"></div><div class="t" style="left:708px;top:150px;font-weight:bold;">+</div><div class="a" style="left:539px;top:145px;width:47px;height:22px;background:#fff;border:1px solid #d9d9d9;border-left:none;border-bottom:none"></div><div class="t" style="left:546px;top:148px;">Record</div>
<svg style="left:548px;top:177px" width="12" height="10" viewBox="0 0 12 10"><path d="M0.3 2.2 C1.5 0.19999999999999996 2.6 0.19999999999999996 4 2 C5.4 3.8 6.6 3.8 8 2 C9.2 0.4 10.4 0.4 11.7 2.6" fill="none" stroke="#555" stroke-width="1.1"/><path d="M0.3 5.2 C1.5 3.2 2.6 3.2 4 5 C5.4 6.8 6.6 6.8 8 5 C9.2 3.4 10.4 3.4 11.7 5.6" fill="none" stroke="#555" stroke-width="1.1"/><path d="M0.3 8.2 C1.5 6.2 2.6 6.2 4 8 C5.4 9.8 6.6 9.8 8 8 C9.2 6.4 10.4 6.4 11.7 8.6" fill="none" stroke="#555" stroke-width="1.1"/></svg><svg style="left:573px;top:177px" width="11" height="11" viewBox="0 0 11 11"><circle cx="5.5" cy="5.6" r="4.9" fill="#fff" stroke="#6a6a6a" stroke-width="1.1"/><rect x="3" y="3.6" width="5" height="4" rx="0.8" fill="#b8b8b8" stroke="#777" stroke-width="0.8"/><path d="M3.4 5.6 H7.6" stroke="#666" stroke-width="0.8"/></svg><svg style="left:598px;top:181px" width="6" height="4" viewBox="0 0 6 4"><path d="M0 0 H6 L3 3.5 Z" fill="#6a6a6a"/></svg><div class="t" style="left:607px;top:175px;color:#7d7d85">All</div>
<div class="a" style="left:550px;top:210px;width:220px;height:67px;border:1px solid #dcdcdc;border-radius:2px"></div><div class="t" style="left:556px;top:204px;background:#f0f0f0;padding:0 2px;color:#505050">Page settings</div><div class="t" style="left:559px;top:227px;color:#6d6d6d;letter-spacing:-0.2px">Epoch:</div><div class="t" style="left:620px;top:227px;color:#6d6d6d;letter-spacing:-0.1px">Start:</div><div class="t" style="left:678px;top:227px;color:#6d6d6d;letter-spacing:-0.2px">Duration:</div><div class="fld" style="left:559px;top:246px;width:57px;height:20px;border-color:#8e8e8e;background:#fff"></div><div class="a" style="left:561px;top:248px;width:39px;height:16px;background:#f0f0f0"></div><div class="a" style="left:600px;top:248px;width:14px;height:16px;background:#e9e9e9"></div><div class="a" style="left:600px;top:255px;width:14px;height:1px;background:#dcdcdc"></div><svg style="left:603px;top:250px" width="8" height="12" viewBox="0 0 8 12"><path d="M0.3 4.2 L4 0.4 L7.7 4.2 Z M0.3 7.8 L4 11.6 L7.7 7.8 Z" fill="#606060"/></svg><div class="t" style="left:559px;top:249px;width:38px;text-align:right;color:#6d6d6d">0</div><div class="fld" style="left:620px;top:246px;width:54px;height:20px"></div><div class="t" style="left:621px;top:249px;width:49px;text-align:right;color:#6d6d6d">0</div><div class="fld" style="left:678px;top:246px;width:54px;height:20px"></div><div class="t" style="left:679px;top:249px;width:49px;text-align:right;color:#6d6d6d">0</div><div class="t" style="left:736px;top:249px;color:#6d6d6d">s</div>
<div class="a" style="left:550px;top:287px;width:220px;height:320px;border:1px solid #dcdcdc;border-radius:2px"></div><div class="t" style="left:556px;top:280px;background:#f0f0f0;padding:0 2px;color:#505050">Events</div><div class="a" style="left:554px;top:296px;width:205px;height:307px;background:#fff"></div><div class="a" style="left:554px;top:314px;width:205px;height:1px;background:#8a8a8a"></div><div class="a" style="left:672px;top:316px;width:1px;height:287px;background:#555"></div><svg style="left:558px;top:303px" width="6" height="4" viewBox="0 0 6 4"><path d="M0 0 H6 L3 3.5 Z" fill="#555"/></svg><div class="t" style="left:567px;top:298px;color:#6d6d6d">File</div><svg style="left:592px;top:303px" width="6" height="4" viewBox="0 0 6 4"><path d="M0 0 H6 L3 3.5 Z" fill="#555"/></svg><div class="t" style="left:600px;top:298px;color:#6d6d6d">Events</div><svg style="left:642px;top:303px" width="6" height="4" viewBox="0 0 6 4"><path d="M0 0 H6 L3 3.5 Z" fill="#555"/></svg><div class="t" style="left:651px;top:298px;color:#6d6d6d">Artifacts</div>
<div class="a" style="left:557px;top:606px;width:204px;height:1px;background:#e2e2e2"></div><div class="a" style="left:557px;top:618px;width:204px;height:1px;background:#fff"></div><div class="a" style="left:0;top:627px;width:761px;height:1px;background:#8e8e8e"></div><div class="a" style="left:557px;top:636px;width:204px;height:1px;background:#e2e2e2"></div><div class="a" style="left:557px;top:646px;width:204px;height:108px;background:#fff;border-top:1px solid #7a7a7a;border-bottom:1px solid #7a7a7a"></div><div class="a" style="left:557px;top:757px;width:204px;height:1px;background:#dcdcdc"></div><div class="a" style="left:557px;top:759px;width:204px;height:3px;background:#fff"></div><div class="a" style="left:557px;top:765px;width:204px;height:1px;background:#dcdcdc"></div><div class="a" style="left:0;top:788px;width:761px;height:5px;background:linear-gradient(#6e6e6e 0,#6e6e6e 1px,#a4a4a4 1px,#a4a4a4 2px,#bdbdbd 2px)"></div><svg style="left:733px;top:773px" width="4" height="7" viewBox="0 0 4 7"><path d="M4 0 V7 L0 3.5 Z" fill="#000"/></svg><div class="t" style="left:741px;top:769px;">Filter</div>
<div class="a" style="left:0;top:629px;width:23px;height:25px;background:#cce4f7;border:1px solid #99d1ff;border-left:none"></div><svg style="left:2px;top:634px" width="15" height="15" viewBox="0 0 15 15"><g transform="translate(0 0)"><rect x="0.5" y="0.5" width="10" height="10" fill="#fff" stroke="#000" stroke-width="1"/><path d="M2 1 H5 L3.5 3.5 Z M6 1 H9 L7.5 3.5 Z" fill="#000"/><path d="M1 4.6 L3.5 8.1 L5.5 5.4 L7.5 8.1 L10 4.6" fill="none" stroke="#222" stroke-width="1"/><path d="M1 10 V9.1 L1.7 8.8 L2.6 10 Z M4.6 10 L5.5 8.7 L6.4 10 Z M8.4 10 L9.3 8.8 L10 9.1 V10 Z" fill="#000"/></g><g transform="translate(2 2)"><rect x="0.5" y="0.5" width="10" height="10" fill="#fff" stroke="#000" stroke-width="1"/><path d="M2 1 H5 L3.5 3.5 Z M6 1 H9 L7.5 3.5 Z" fill="#000"/><path d="M1 4.6 L3.5 8.1 L5.5 5.4 L7.5 8.1 L10 4.6" fill="none" stroke="#222" stroke-width="1"/><path d="M1 10 V9.1 L1.7 8.8 L2.6 10 Z M4.6 10 L5.5 8.7 L6.4 10 Z M8.4 10 L9.3 8.8 L10 9.1 V10 Z" fill="#000"/></g><g transform="translate(4 4)"><rect x="0.5" y="0.5" width="10" height="10" fill="#fff" stroke="#000" stroke-width="1"/><path d="M2 1 H5 L3.5 3.5 Z M6 1 H9 L7.5 3.5 Z" fill="#000"/><path d="M1 4.6 L3.5 8.1 L5.5 5.4 L7.5 8.1 L10 4.6" fill="none" stroke="#222" stroke-width="1"/><path d="M1 10 V9.1 L1.7 8.8 L2.6 10 Z M4.6 10 L5.5 8.7 L6.4 10 Z M8.4 10 L9.3 8.8 L10 9.1 V10 Z" fill="#000"/></g></svg><svg style="left:2px;top:686px" width="15" height="15" viewBox="0 0 15 15"><g transform="translate(0 0)"><radialGradient id="bj0" cx="0.75" cy="0.05" r="1.08"><stop offset="0" stop-color="#1560e0"/><stop offset="0.22" stop-color="#12b4f4"/><stop offset="0.5" stop-color="#2fe6e0"/><stop offset="0.62" stop-color="#a8f070"/><stop offset="0.7" stop-color="#f4e820"/><stop offset="0.8" stop-color="#ff8a00"/><stop offset="0.9" stop-color="#f21a00"/><stop offset="1" stop-color="#c00000"/></radialGradient><rect x="0.5" y="0.5" width="10" height="10" fill="url(#bj0)" stroke="#000"/><rect x="0" y="9.6" width="11" height="1.4" fill="#000"/></g><g transform="translate(2 2)"><radialGradient id="bj1" cx="0.75" cy="0.05" r="1.08"><stop offset="0" stop-color="#1560e0"/><stop offset="0.22" stop-color="#12b4f4"/><stop offset="0.5" stop-color="#2fe6e0"/><stop offset="0.62" stop-color="#a8f070"/><stop offset="0.7" stop-color="#f4e820"/><stop offset="0.8" stop-color="#ff8a00"/><stop offset="0.9" stop-color="#f21a00"/><stop offset="1" stop-color="#c00000"/></radialGradient><rect x="0.5" y="0.5" width="10" height="10" fill="url(#bj1)" stroke="#000"/><rect x="0" y="9.6" width="11" height="1.4" fill="#000"/></g><g transform="translate(4 4)"><radialGradient id="bj2" cx="0.75" cy="0.05" r="1.08"><stop offset="0" stop-color="#1560e0"/><stop offset="0.22" stop-color="#12b4f4"/><stop offset="0.5" stop-color="#2fe6e0"/><stop offset="0.62" stop-color="#a8f070"/><stop offset="0.7" stop-color="#f4e820"/><stop offset="0.8" stop-color="#ff8a00"/><stop offset="0.9" stop-color="#f21a00"/><stop offset="1" stop-color="#c00000"/></radialGradient><rect x="0.5" y="0.5" width="10" height="10" fill="url(#bj2)" stroke="#000"/><rect x="0" y="9.6" width="11" height="1.4" fill="#000"/></g></svg><svg style="left:2px;top:712px" width="15" height="15" viewBox="0 0 15 15"><g transform="translate(0 0)"><rect x="0.5" y="0.5" width="10" height="10" fill="#fff" stroke="#111"/><path d="M4 1 V10 M7 1 V10 M1 4 H10 M1 7 H10" stroke="#8a8a8a" stroke-width="0.9"/></g><g transform="translate(2 2)"><rect x="0.5" y="0.5" width="10" height="10" fill="#fff" stroke="#111"/><path d="M4 1 V10 M7 1 V10 M1 4 H10 M1 7 H10" stroke="#8a8a8a" stroke-width="0.9"/></g><g transform="translate(4 4)"><rect x="0.5" y="0.5" width="10" height="10" fill="#fff" stroke="#111"/><path d="M4 1 V10 M7 1 V10 M1 4 H10 M1 7 H10" stroke="#8a8a8a" stroke-width="0.9"/></g></svg><svg style="left:1px;top:660px" width="17" height="15" viewBox="0 0 17 15"><path d="M1.1 4.4 C1.9000000000000001 1.6 6.8 0.4 9.3 1.4 C11.8 2.2 13.9 4.4 13.3 6.3999999999999995 C12.700000000000001 8.200000000000001 9.9 8.0 8.9 9.0 C7.7 9.8 5.8999999999999995 9.600000000000001 5.3 8.4 C3.6999999999999997 8.6 0.7 7.6 1.1 4.4 Z" fill="#bdbdbd" stroke="#333" stroke-width="1.1"/><path d="M2.2 6.2 C3.0 3.4000000000000004 7.9 2.2 10.4 3.2 C12.9 4.0 15.0 6.2 14.4 8.2 C13.8 10.0 11.0 9.8 10.0 10.799999999999999 C8.8 11.6 7.0 11.4 6.4 10.2 C4.8 10.4 1.7999999999999998 9.4 2.2 6.2 Z" fill="#bdbdbd" stroke="#333" stroke-width="1.1"/><path d="M3.4000000000000004 8.6 C4.2 5.8 9.1 4.6 11.6 5.6 C14.1 6.4 16.2 8.6 15.6 10.6 C15.0 12.4 12.2 12.2 11.2 13.2 C10.0 14 8.2 13.8 7.6 12.6 C6.0 12.8 3.0 11.8 3.4000000000000004 8.6 Z" fill="#bdbdbd" stroke="#333" stroke-width="1.1"/><path d="M7.6 12.4 L9.6 10" stroke="#333" stroke-width="1"/></svg><div class="a" style="left:0;top:733px;width:21px;height:2px;background:linear-gradient(#8a8a8a 50%,#fff 50%)"></div><div class="t" style="left:2px;top:741px;font-size:9px;font-weight:bold;line-height:12px;height:12px;transform:scaleX(0.74);transform-origin:0 0;color:#111">RUN</div><div class="a" style="left:0;top:760px;width:21px;height:2px;background:linear-gradient(#8a8a8a 50%,#fff 50%)"></div><svg style="left:2px;top:766px" width="15" height="15" viewBox="0 0 15 15"><path d="M5.2 4.2 L9 0.8 L9.6 3 C12 3 14 4.6 14 7.2 L12.6 8.4 C12.2 6.6 11 6 9.8 6.2 L10.2 8 Z" fill="#d6d6d6" stroke="#6e6e6e" stroke-width="0.9" stroke-linejoin="round"/><path d="M9.6 10.8 L5.8 14.2 L5.2 12 C2.8 12 0.8 10.4 0.8 7.8 L2.2 6.6 C2.6 8.4 3.8 9 5 8.8 L4.6 7 Z" fill="#d6d6d6" stroke="#6e6e6e" stroke-width="0.9" stroke-linejoin="round"/></svg>
<div class="a" style="left:25px;top:628px;width:1px;height:132px;background:#fbfbfb"></div><div class="a" style="left:28px;top:637px;width:520px;height:121px;border:1px solid #dcdcdc;border-radius:2px"></div><div class="t" style="left:33px;top:630px;background:#f0f0f0;padding:0 2px">Files to process: Data [0]</div><div class="a" style="left:32px;top:646px;width:512px;height:108px;background:#fff;border:1px solid #7a7a7a;box-shadow:inset 1px 1px 0 #bdbdbd"></div><div class="a" style="left:25px;top:760px;width:524px;height:5px;background:#fff"></div><div class="a" style="left:81px;top:765px;width:53px;height:20px;background:#f0f0f0;border:1px solid #d9d9d9"></div><div class="t" style="left:86px;top:767px;">Process2</div><div class="a" style="left:25px;top:760px;width:57px;height:27px;background:#fff;border:1px solid #d9d9d9;border-top:none;border-left:none"></div><div class="t" style="left:30px;top:769px;">Process1</div>
<div class="menu" style="left:152px;top:439px;width:172px;height:360px"><div class="gut" style="width:29px"></div><svg style="left:8px;top:8px" width="11" height="11" viewBox="0 0 11 11"><radialGradient id="jg8_8" cx="0.75" cy="0.05" r="1.08"><stop offset="0" stop-color="#1560e0"/><stop offset="0.22" stop-color="#12b4f4"/><stop offset="0.5" stop-color="#2fe6e0"/><stop offset="0.62" stop-color="#a8f070"/><stop offset="0.7" stop-color="#f4e820"/><stop offset="0.8" stop-color="#ff8a00"/><stop offset="0.9" stop-color="#f21a00"/><stop offset="1" stop-color="#c00000"/></radialGradient><rect x="0.5" y="0.5" width="10" height="10" fill="url(#jg8_8)" stroke="#000" stroke-width="1"/><rect x="0" y="9.6" width="11" height="1.4" fill="#000"/></svg><div class="t" style="left:35px;top:6px;letter-spacing:-0.054px;">One channel</div><svg style="left:8px;top:30px" width="11" height="11" viewBox="0 0 11 11"><radialGradient id="jg8_30" cx="0.75" cy="0.05" r="1.08"><stop offset="0" stop-color="#1560e0"/><stop offset="0.22" stop-color="#12b4f4"/><stop offset="0.5" stop-color="#2fe6e0"/><stop offset="0.62" stop-color="#a8f070"/><stop offset="0.7" stop-color="#f4e820"/><stop offset="0.8" stop-color="#ff8a00"/><stop offset="0.9" stop-color="#f21a00"/><stop offset="1" stop-color="#c00000"/></radialGradient><rect x="0.5" y="0.5" width="10" height="10" fill="url(#jg8_30)" stroke="#000" stroke-width="1"/><rect x="0" y="9.6" width="11" height="1.4" fill="#000"/></svg><div class="t" style="left:35px;top:28px;letter-spacing:-0.019px;">All channels</div><svg style="left:8px;top:52px" width="11" height="11" viewBox="0 0 11 11"><radialGradient id="jg8_52" cx="0.75" cy="0.05" r="1.08"><stop offset="0" stop-color="#1560e0"/><stop offset="0.22" stop-color="#12b4f4"/><stop offset="0.5" stop-color="#2fe6e0"/><stop offset="0.62" stop-color="#a8f070"/><stop offset="0.7" stop-color="#f4e820"/><stop offset="0.8" stop-color="#ff8a00"/><stop offset="0.9" stop-color="#f21a00"/><stop offset="1" stop-color="#c00000"/></radialGradient><rect x="0.5" y="0.5" width="10" height="10" fill="url(#jg8_52)" stroke="#000" stroke-width="1"/><rect x="0" y="9.6" width="11" height="1.4" fill="#000"/></svg><div class="t" style="left:35px;top:50px;letter-spacing:-0.071px;">2D Layout (maps)</div><svg style="left:8px;top:74px" width="11" height="11" viewBox="0 0 11 11"><radialGradient id="jg8_74" cx="0.75" cy="0.05" r="1.08"><stop offset="0" stop-color="#1560e0"/><stop offset="0.22" stop-color="#12b4f4"/><stop offset="0.5" stop-color="#2fe6e0"/><stop offset="0.62" stop-color="#a8f070"/><stop offset="0.7" stop-color="#f4e820"/><stop offset="0.8" stop-color="#ff8a00"/><stop offset="0.9" stop-color="#f21a00"/><stop offset="1" stop-color="#c00000"/></radialGradient><rect x="0.5" y="0.5" width="10" height="10" fill="url(#jg8_74)" stroke="#000" stroke-width="1"/><rect x="0" y="9.6" width="11" height="1.4" fill="#000"/></svg><div class="t" style="left:35px;top:72px;letter-spacing:-0.009px;">2D Layout (no overlap)</div><div class="sep" style="left:32px;top:95px;width:137px"></div><svg style="left:8px;top:108px" width="11" height="11" viewBox="0 0 11 11"><rect x="0.5" y="0.5" width="10" height="10" fill="#fff" stroke="#000"/><rect x="0" y="0" width="11" height="1.3" fill="#000"/><path d="M2.2 2 V7 L3.2 8.6 L4.4 7.8 L5.6 8.8 L6.8 8 L8 8.8 L9.2 8.2" fill="none" stroke="#111" stroke-width="1"/></svg><div class="t" style="left:35px;top:106px;letter-spacing:0.08px;">Power spectrum</div><svg style="left:8px;top:130px" width="11" height="11" viewBox="0 0 11 11"><rect x="0.5" y="0.5" width="10" height="10" fill="#fff" stroke="#000" stroke-width="1"/><path d="M2 1 H5 L3.5 3.5 Z M6 1 H9 L7.5 3.5 Z" fill="#000"/><path d="M1 4.6 L3.5 8.1 L5.5 5.4 L7.5 8.1 L10 4.6" fill="none" stroke="#222" stroke-width="1"/><path d="M1 10 V9.1 L1.7 8.8 L2.6 10 Z M4.6 10 L5.5 8.7 L6.4 10 Z M8.4 10 L9.3 8.8 L10 9.1 V10 Z" fill="#000"/></svg><div class="t" style="left:35px;top:128px;letter-spacing:-0.131px;">Time series</div><svg style="left:8px;top:152px" width="11" height="11" viewBox="0 0 11 11"><linearGradient id="ig8_152" x1="1" y1="0" x2="0" y2="1"><stop offset="0" stop-color="#4a4a4a"/><stop offset="0.4" stop-color="#7c7c7c"/><stop offset="0.5" stop-color="#d0d0d0"/><stop offset="0.6" stop-color="#7c7c7c"/><stop offset="1" stop-color="#444"/></linearGradient><rect x="0.5" y="0.5" width="10" height="10" fill="url(#ig8_152)" stroke="#111"/></svg><div class="t" style="left:35px;top:150px;letter-spacing:-0.173px;">Image [channels x time]</div><div class="sep" style="left:32px;top:173px;width:137px"></div><svg style="left:6px;top:184px" width="14" height="14" viewBox="0 0 14 14"><clipPath id="sc6_184"><circle cx="7" cy="7" r="6.2"/></clipPath><circle cx="7" cy="7" r="6.3" fill="#f6f6f6"/><path d="M0 7.2 C2 4.4 4.4 4.2 6.4 6.6 C8.4 9 11 8.6 14 5.8 V0 H0 Z" fill="#adadad" clip-path="url(#sc6_184)"/><path d="M0 7.2 C2 4.4 4.4 4.2 6.4 6.6 C8.4 9 11 8.6 14 5.8" fill="none" stroke="#111" stroke-width="1.2" clip-path="url(#sc6_184)"/><circle cx="7" cy="7" r="6.3" fill="none" stroke="#111" stroke-width="1.25"/></svg><div class="t" style="left:35px;top:184px;letter-spacing:-0.044px;">3D Sensor cap</div><svg style="left:6px;top:206px" width="14" height="14" viewBox="0 0 14 14"><clipPath id="sc6_206"><circle cx="7" cy="7" r="6.2"/></clipPath><circle cx="7" cy="7" r="6.3" fill="#f6f6f6"/><path d="M0 7.2 C2 4.4 4.4 4.2 6.4 6.6 C8.4 9 11 8.6 14 5.8 V0 H0 Z" fill="#adadad" clip-path="url(#sc6_206)"/><path d="M0 7.2 C2 4.4 4.4 4.2 6.4 6.6 C8.4 9 11 8.6 14 5.8" fill="none" stroke="#111" stroke-width="1.2" clip-path="url(#sc6_206)"/><circle cx="7" cy="7" r="6.3" fill="none" stroke="#111" stroke-width="1.25"/></svg><div class="t" style="left:35px;top:206px;letter-spacing:-0.044px;">2D Sensor cap</div><svg style="left:6px;top:228px" width="14" height="14" viewBox="0 0 14 14"><clipPath id="sc6_228"><circle cx="7" cy="7" r="6.2"/></clipPath><circle cx="7" cy="7" r="6.3" fill="#f6f6f6"/><path d="M0 7.2 C2 4.4 4.4 4.2 6.4 6.6 C8.4 9 11 8.6 14 5.8 V0 H0 Z" fill="#adadad" clip-path="url(#sc6_228)"/><path d="M0 7.2 C2 4.4 4.4 4.2 6.4 6.6 C8.4 9 11 8.6 14 5.8" fill="none" stroke="#111" stroke-width="1.2" clip-path="url(#sc6_228)"/><circle cx="7" cy="7" r="6.3" fill="none" stroke="#111" stroke-width="1.25"/></svg><div class="t" style="left:35px;top:228px;letter-spacing:-0.145px;">2D Disc</div><svg style="left:6px;top:250px" width="15" height="14" viewBox="0 0 15 14"><path d="M5 2.4 L7 0.8 L9 2.8 L11 1.2" fill="none" stroke="#111" stroke-width="0.95"/><path d="M0.4 5 L2.6 3.6 L5 6 L7.4 3.8 L9.8 6 L12.2 3.8 L14.6 5.4" fill="none" stroke="#111" stroke-width="0.95"/><path d="M0.4 8.6 L2.6 7.2 L5 9.6 L7.4 7.4 L9.8 9.6 L12.2 7.4 L14.2 8.8" fill="none" stroke="#111" stroke-width="0.95"/><path d="M4 11 L6 12.8 L8 11 L10 13" fill="none" stroke="#111" stroke-width="0.95"/></svg><div class="t" style="left:35px;top:250px;letter-spacing:-0.062px;">2D Layout</div><svg style="left:8px;top:275px" width="10" height="8" viewBox="0 0 10 8"><rect x="2" y="0" width="2" height="2" fill="#000"/><rect x="6" y="0" width="2" height="2" fill="#000"/><rect x="0" y="3" width="2" height="2" fill="#000"/><rect x="4" y="3" width="2" height="2" fill="#000"/><rect x="8" y="3" width="2" height="2" fill="#000"/><rect x="2" y="6" width="2" height="2" fill="#000"/><rect x="6" y="6" width="2" height="2" fill="#000"/></svg><div class="t" style="left:35px;top:272px;letter-spacing:-0.153px;">3D Electrodes</div><div class="sep" style="left:32px;top:295px;width:137px"></div><svg style="left:8px;top:307px" width="10" height="12" viewBox="0 0 10 12"><path d="M5 0.6 C8 0.6 9.4 2.6 9.4 5 C9.4 6.8 8.6 7.6 8.2 8.6 L7.8 10.6 Q5 12.2 2.2 10.6 L1.8 8.6 C1.4 7.6 0.6 6.8 0.6 5 C0.6 2.6 2 0.6 5 0.6 Z" fill="#fafafa" stroke="#111" stroke-width="1.1"/><ellipse cx="3.3" cy="5.2" rx="1.1" ry="1.3" fill="#222"/><ellipse cx="6.7" cy="5.2" rx="1.1" ry="1.3" fill="#222"/><path d="M5 6.4 V8" stroke="#444" stroke-width="0.9"/><path d="M3.6 9.4 H6.4" stroke="#222" stroke-width="1"/></svg><div class="t" style="left:35px;top:306px;letter-spacing:-0.056px;">Display on scalp</div><div class="sep" style="left:32px;top:329px;width:137px"></div><div class="a" style="left:2px;top:336px;width:168px;height:22px;background:#91c9f7"></div><svg style="left:160px;top:343px" width="5" height="9" viewBox="0 0 5 9"><path d="M0.5 0.5 L4.5 4.5 L0.5 8.5" fill="none" stroke="#222" stroke-width="1.1"/></svg><svg style="left:6px;top:340px" width="14" height="14" viewBox="0 0 14 14"><linearGradient id="mg6_340" x1="0" y1="0" x2="1" y2="0.3"><stop offset="0" stop-color="#7c7c7c"/><stop offset="0.5" stop-color="#606060"/><stop offset="1" stop-color="#3e3e3e"/></linearGradient><path d="M0 8.2 C0 6.6 2.4 5.8 4.8 6.2 L6.6 8.4 L4.8 10.6 C2.8 10 0.4 10.2 0 8.2 Z" fill="#868686"/><path d="M10 0.3 C11.4 3 12.6 7 13.9 10 C13.4 10.9 12.6 10.1 12 9.6 C10 10.8 8 12.4 6.4 13.9 C5.6 12.4 4.8 11 4 9.9 L5.6 8.3 L4.2 6.4 C6.4 5 8.4 2.4 10 0.3 Z" fill="url(#mg6_340)"/></svg><div class="t" style="left:35px;top:340px;letter-spacing:-0.3px;">File</div></div>
<div class="menu" style="left:316px;top:417px;width:241px;height:380px"><div class="gut" style="width:32px"></div><svg style="left:6px;top:6px" width="14" height="14" viewBox="0 0 14 14"><linearGradient id="mg6_6" x1="0" y1="0" x2="1" y2="0.3"><stop offset="0" stop-color="#7c7c7c"/><stop offset="0.5" stop-color="#606060"/><stop offset="1" stop-color="#3e3e3e"/></linearGradient><path d="M0 8.2 C0 6.6 2.4 5.8 4.8 6.2 L6.6 8.4 L4.8 10.6 C2.8 10 0.4 10.2 0 8.2 Z" fill="#868686"/><path d="M10 0.3 C11.4 3 12.6 7 13.9 10 C13.4 10.9 12.6 10.1 12 9.6 C10 10.8 8 12.4 6.4 13.9 C5.6 12.4 4.8 11 4 9.9 L5.6 8.3 L4.2 6.4 C6.4 5 8.4 2.4 10 0.3 Z" fill="url(#mg6_6)"/></svg><div class="t" style="left:35px;top:6px;letter-spacing:0.155px;">View file contents</div><svg style="left:6px;top:28px" width="14" height="14" viewBox="0 0 14 14"><linearGradient id="mg6_28" x1="0" y1="0" x2="1" y2="0.3"><stop offset="0" stop-color="#7c7c7c"/><stop offset="0.5" stop-color="#606060"/><stop offset="1" stop-color="#3e3e3e"/></linearGradient><path d="M0 8.2 C0 6.6 2.4 5.8 4.8 6.2 L6.6 8.4 L4.8 10.6 C2.8 10 0.4 10.2 0 8.2 Z" fill="#868686"/><path d="M10 0.3 C11.4 3 12.6 7 13.9 10 C13.4 10.9 12.6 10.1 12 9.6 C10 10.8 8 12.4 6.4 13.9 C5.6 12.4 4.8 11 4 9.9 L5.6 8.3 L4.2 6.4 C6.4 5 8.4 2.4 10 0.3 Z" fill="url(#mg6_28)"/></svg><div class="t" style="left:35px;top:28px;letter-spacing:0.193px;">View file history</div><svg style="left:5px;top:49px" width="16" height="16" viewBox="0 0 16 16"><rect x="2" y="0" width="14" height="14" fill="#fafafa"/><path d="M2 3.5 H16 M2 7.5 H16 M2 10.5 H16 M6.5 0 V14 M10.5 0 V14 M14.5 0 V14" stroke="#e6e6e6" stroke-width="1"/><rect x="0.6" y="0" width="1.6" height="15.6" fill="#000"/><rect x="0" y="14" width="16" height="1.4" fill="#000"/><path d="M0 1.5 H1 M0 4.5 H1 M0 7.5 H1 M0 10.5 H1 M5 15 V16 M9 15 V16 M13 15 V16" stroke="#000" stroke-width="1"/><rect x="4" y="9" width="2" height="5" fill="#6e6e6e"/><rect x="6" y="5" width="2" height="9" fill="#6a6a6a"/><rect x="8" y="2" width="2" height="12" fill="#666"/><rect x="10" y="7" width="2" height="7" fill="#6e6e6e"/><rect x="12" y="9" width="2" height="5" fill="#747474"/><rect x="14" y="11" width="2" height="3" fill="#7c7c7c"/></svg><div class="t" style="left:35px;top:50px;letter-spacing:0.157px;">View histogram</div><div class="sep" style="left:32px;top:73px;width:205px"></div><svg style="left:5px;top:84px" width="15" height="15" viewBox="0 0 15 15"><g transform="rotate(-45 7.5 7.5)"><rect x="2.3" y="2.3" width="10.4" height="10.4" rx="0.8" fill="#383838"/><rect x="4.4" y="2.9" width="6.2" height="3.2" fill="#8a8a8a"/><rect x="8.4" y="3.2" width="1.5" height="2.4" fill="#383838"/><rect x="3.8" y="7.4" width="7.4" height="4.6" fill="#f4f4f4"/><path d="M3.8 9 H11.2 M3.8 10.5 H11.2" stroke="#d0d0d0" stroke-width="0.6"/></g></svg><div class="t" style="left:35px;top:84px;letter-spacing:-0.039px;">Export to file</div><svg style="left:5px;top:106px" width="16" height="15" viewBox="0 0 16 15"><g transform="translate(2 1)"><linearGradient id="ms5_106" x1="0" y1="0" x2="1" y2="0.3"><stop offset="0" stop-color="#7c7c7c"/><stop offset="0.5" stop-color="#606060"/><stop offset="1" stop-color="#3e3e3e"/></linearGradient><path d="M0 8.2 C0 6.6 2.4 5.8 4.8 6.2 L6.6 8.4 L4.8 10.6 C2.8 10 0.4 10.2 0 8.2 Z" fill="#868686"/><path d="M10 0.3 C11.4 3 12.6 7 13.9 10 C13.4 10.9 12.6 10.1 12 9.6 C10 10.8 8 12.4 6.4 13.9 C5.6 12.4 4.8 11 4 9.9 L5.6 8.3 L4.2 6.4 C6.4 5 8.4 2.4 10 0.3 Z" fill="url(#ms5_106)"/></g><path d="M0 2.4 H6 M4.2 0.6 L6.6 2.6 L4.8 4.8" stroke="#222" stroke-width="1.2" fill="none"/></svg><div class="t" style="left:35px;top:106px;letter-spacing:-0.15px;">Export to Matlab</div><svg style="left:5px;top:128px" width="16" height="15" viewBox="0 0 16 15"><g transform="translate(2 1)"><linearGradient id="ms5_128" x1="0" y1="0" x2="1" y2="0.3"><stop offset="0" stop-color="#7c7c7c"/><stop offset="0.5" stop-color="#606060"/><stop offset="1" stop-color="#3e3e3e"/></linearGradient><path d="M0 8.2 C0 6.6 2.4 5.8 4.8 6.2 L6.6 8.4 L4.8 10.6 C2.8 10 0.4 10.2 0 8.2 Z" fill="#868686"/><path d="M10 0.3 C11.4 3 12.6 7 13.9 10 C13.4 10.9 12.6 10.1 12 9.6 C10 10.8 8 12.4 6.4 13.9 C5.6 12.4 4.8 11 4 9.9 L5.6 8.3 L4.2 6.4 C6.4 5 8.4 2.4 10 0.3 Z" fill="url(#ms5_128)"/></g><path d="M1 2.2 C3.6 1.8 5.6 3 6.6 5 M2.6 0.6 L0.6 2.2 L2.6 3.8" stroke="#222" stroke-width="1.2" fill="none"/></svg><div class="t" style="left:35px;top:128px;letter-spacing:-0.228px;">Import from Matlab</div><div class="sep" style="left:32px;top:151px;width:205px"></div><svg style="left:5px;top:163px" width="15" height="13" viewBox="0 0 15 13"><path d="M0.5 0.5 H5.5 L8.5 3.5 V10.5 H0.5 Z" fill="#f8f8f8" stroke="#a2a2a2"/><path d="M5.5 0.5 V3.5 H8.5" fill="none" stroke="#a2a2a2"/><path d="M2 3.5 H5 M2 5.5 H7 M2 7.5 H7" stroke="#b4b4b4"/><path d="M6.5 3.5 H11.5 L14.5 6.5 V12.5 H6.5 Z" fill="#fcfcfc" stroke="#8c8c8c"/><path d="M11.5 3.5 V6.5 H14.5" fill="none" stroke="#8c8c8c"/><path d="M6.5 13 H15 V7" fill="none" stroke="#6a6a6a" stroke-width="1"/><path d="M8 6.5 H11 M8 8.5 H13 M8 10.5 H13" stroke="#9a9a9a"/></svg><div class="t" style="left:35px;top:162px;letter-spacing:-0.047px;">Copy</div><div class="sc" style="left:178px;top:161px">Ctrl+C</div><svg style="left:8px;top:184px" width="10" height="13" viewBox="0 0 10 13"><path d="M2.2 0.3 L6.4 8.2 M8 0.3 L3.8 8.2" stroke="#8a8a8a" stroke-width="1.5" fill="none"/><circle cx="2.6" cy="10.4" r="1.9" fill="#c8c8c8" stroke="#4a4a4a" stroke-width="1.7"/><circle cx="7.6" cy="10.4" r="1.9" fill="#c8c8c8" stroke="#4a4a4a" stroke-width="1.7"/></svg><div class="t" style="left:35px;top:184px;letter-spacing:-0.142px;">Cut</div><div class="sc" style="left:178px;top:183px">Ctrl+X</div><svg style="left:7px;top:207px" width="12.5" height="12.5" viewBox="0 0 12.5 12.5"><path d="M2 2 L10.5 10.5 M10.5 2 L2 10.5" stroke="#6a6a6a" stroke-width="3.2" stroke-linecap="round"/></svg><div class="t" style="left:35px;top:206px;letter-spacing:-0.283px;">Delete</div><div class="sc" style="left:178px;top:205px">Delete</div><svg style="left:7px;top:228px" width="13" height="14" viewBox="0 0 13 14"><rect x="0.7" y="1.5" width="10.6" height="11.8" fill="#fafafa" stroke="#8a8a8a" stroke-width="1"/><path d="M0.7 1 V13.3 H11.8" fill="none" stroke="#222" stroke-width="1.4"/><path d="M11.3 13.3 V7" stroke="#555" stroke-width="1"/><path d="M2.5 4.5 H7.5 M2.5 6.5 H6.5 M2.5 8.5 H5.5" stroke="#9a9a9a"/><path d="M3 11.2 H8.5" stroke="#222" stroke-width="1.4"/><path d="M10.8 2.2 L12.4 3.6 L6.8 9.6 L4.8 10.4 L5.4 8.2 Z" fill="#bdbdbd" stroke="#333" stroke-width="0.9"/><path d="M10 3.2 L11.6 4.6" stroke="#333" stroke-width="0.8"/></svg><div class="t" style="left:35px;top:228px;letter-spacing:-0.3px;">Rename</div><div class="sc" style="left:178px;top:227px">F2</div><svg style="left:5px;top:251px" width="15" height="13" viewBox="0 0 15 13"><path d="M0.5 0.5 H5.5 L8.5 3.5 V10.5 H0.5 Z" fill="#f8f8f8" stroke="#a2a2a2"/><path d="M5.5 0.5 V3.5 H8.5" fill="none" stroke="#a2a2a2"/><path d="M2 3.5 H5 M2 5.5 H7 M2 7.5 H7" stroke="#b4b4b4"/><path d="M6.5 3.5 H11.5 L14.5 6.5 V12.5 H6.5 Z" fill="#fcfcfc" stroke="#8c8c8c"/><path d="M11.5 3.5 V6.5 H14.5" fill="none" stroke="#8c8c8c"/><path d="M6.5 13 H15 V7" fill="none" stroke="#6a6a6a" stroke-width="1"/><path d="M8 6.5 H11 M8 8.5 H13 M8 10.5 H13" stroke="#9a9a9a"/></svg><div class="t" style="left:35px;top:250px;letter-spacing:-0.127px;">Duplicate file</div><div class="sep" style="left:32px;top:273px;width:205px"></div><svg style="left:7px;top:285px" width="12" height="12" viewBox="0 0 12 12"><linearGradient id="gg7_285" x1="0" y1="0" x2="1" y2="1"><stop offset="0" stop-color="#dcdcdc"/><stop offset="1" stop-color="#bcbcbc"/></linearGradient><path d="M11.53 3.66 L11.88 4.81 L10.49 5.77 L10.45 6.67 L11.74 7.76 L11.27 8.87 L9.59 8.71 L8.98 9.37 L9.26 11.04 L8.20 11.58 L7.01 10.39 L6.11 10.50 L5.26 11.95 L4.09 11.69 L3.95 10.01 L3.20 9.52 L1.61 10.09 L0.88 9.13 L1.86 7.75 L1.59 6.89 L0.01 6.31 L0.07 5.11 L1.70 4.68 L2.05 3.85 L1.21 2.38 L2.03 1.50 L3.55 2.22 L4.35 1.81 L4.66 0.15 L5.85 0.00 L6.55 1.53 L7.43 1.73 L8.73 0.66 L9.74 1.31 L9.30 2.94 L9.84 3.65 Z" fill="url(#gg7_285)" stroke="#8e8e8e" stroke-width="0.8" stroke-linejoin="round"/><circle cx="6" cy="6" r="1.4" fill="#fafafa" stroke="#8a8a8a" stroke-width="0.8"/></svg><div class="t" style="left:35px;top:284px;letter-spacing:0.079px;">Process</div><svg style="left:228px;top:287px" width="5" height="9" viewBox="0 0 5 9"><path d="M0.5 0.5 L4.5 4.5 L0.5 8.5" fill="none" stroke="#222" stroke-width="1.1"/></svg><div class="sep" style="left:32px;top:307px;width:205px"></div><svg style="left:5px;top:319px" width="15" height="13" viewBox="0 0 15 13"><path d="M0.5 0.5 H5.5 L8.5 3.5 V10.5 H0.5 Z" fill="#f8f8f8" stroke="#a2a2a2"/><path d="M5.5 0.5 V3.5 H8.5" fill="none" stroke="#a2a2a2"/><path d="M2 3.5 H5 M2 5.5 H7 M2 7.5 H7" stroke="#b4b4b4"/><path d="M6.5 3.5 H11.5 L14.5 6.5 V12.5 H6.5 Z" fill="#fcfcfc" stroke="#8c8c8c"/><path d="M11.5 3.5 V6.5 H14.5" fill="none" stroke="#8c8c8c"/><path d="M6.5 13 H15 V7" fill="none" stroke="#6a6a6a" stroke-width="1"/><path d="M8 6.5 H11 M8 8.5 H13 M8 10.5 H13" stroke="#9a9a9a"/></svg><div class="t" style="left:35px;top:318px;letter-spacing:-0.062px;">Copy file path to clipboard</div><svg style="left:6px;top:340px" width="14" height="14" viewBox="0 0 14 14"><linearGradient id="mg6_340" x1="0" y1="0" x2="1" y2="0.3"><stop offset="0" stop-color="#7c7c7c"/><stop offset="0.5" stop-color="#606060"/><stop offset="1" stop-color="#3e3e3e"/></linearGradient><path d="M0 8.2 C0 6.6 2.4 5.8 4.8 6.2 L6.6 8.4 L4.8 10.6 C2.8 10 0.4 10.2 0 8.2 Z" fill="#868686"/><path d="M10 0.3 C11.4 3 12.6 7 13.9 10 C13.4 10.9 12.6 10.1 12 9.6 C10 10.8 8 12.4 6.4 13.9 C5.6 12.4 4.8 11 4 9.9 L5.6 8.3 L4.2 6.4 C6.4 5 8.4 2.4 10 0.3 Z" fill="url(#mg6_340)"/></svg><div class="t" style="left:35px;top:340px;letter-spacing:-0.042px;">Go to this directory (Matlab)</div><svg style="left:5px;top:362px" width="15" height="14" viewBox="0 0 15 14"><path d="M0.7 11.6 V2 Q0.7 0.7 2 0.7 H6 Q7 0.7 7.4 2 H12 Q13 2 13 3 V4.4" fill="#e0e0e0" stroke="#222" stroke-width="1.2"/><path d="M0.7 11.8 L3 4.6 H14.6 L12.4 11.8 Z" fill="#c4c4c4" stroke="#222" stroke-width="1.2" stroke-linejoin="round"/><circle cx="6.2" cy="6.6" r="3.3" fill="#f4f4f4" stroke="#222" stroke-width="1.2"/><path d="M8.6 9.2 L12.4 13.6" stroke="#222" stroke-width="2"/></svg><div class="t" style="left:35px;top:362px;letter-spacing:0.054px;">Show in file explorer</div></div>
</body></html>
